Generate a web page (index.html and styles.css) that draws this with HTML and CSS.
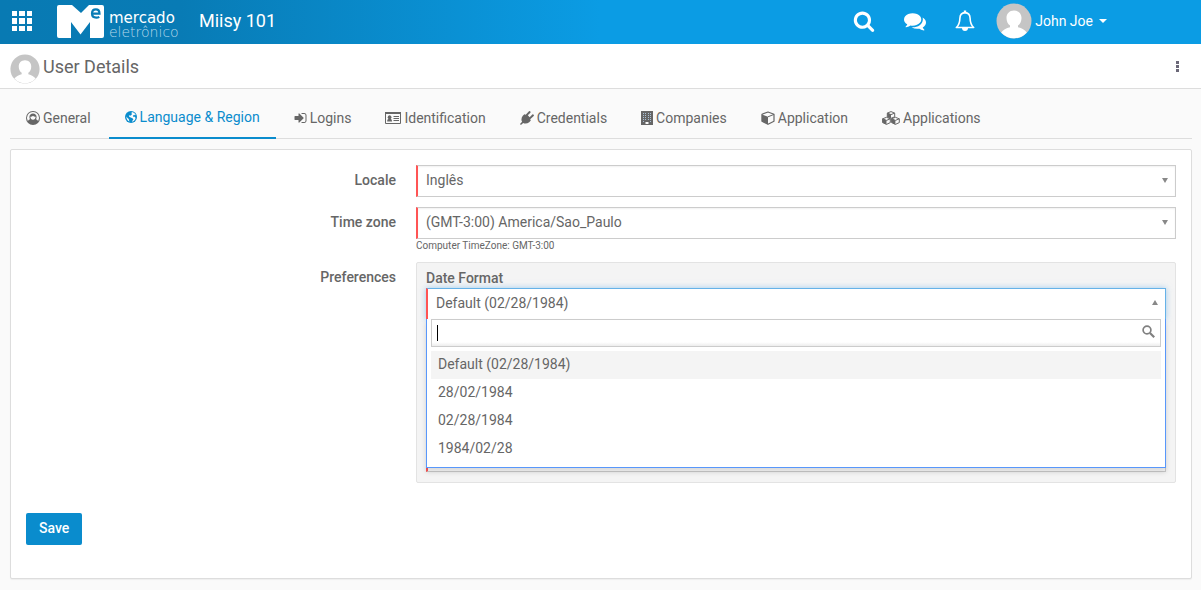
FILE: index.html
```html
<!DOCTYPE html>
<html lang="en">
<head>
<meta charset="utf-8">
<meta name="viewport" content="width=device-width, initial-scale=1">
<title>User Details</title>
<link rel="stylesheet" href="styles.css">
</head>
<body>
<svg class="defs" aria-hidden="true">
  <symbol id="avatar" viewBox="0 0 36 36">
    <circle cx="18" cy="18" r="17.5" fill="#c5c5c5"/>
    <path fill="#fff" d="M18 7.500c-4.600 0-7.500 3.300-7.500 7.500 0 3.300 1.300 6 3.500 7.600v1.600c-3.800.8-7 3-8.800 5.300A17.300 17.300 0 0 0 18 35.300 17.300 17.300 0 0 0 30.800 29.500c-1.800-2.300-5-4.500-8.800-5.300v-1.600c2.200-1.600 3.500-4.300 3.500-7.600 0-4.200-2.900-7.500-7.500-7.500z"/>
  </symbol>
</svg>
<header class="topbar">
  <button class="icon-button" type="button" aria-label="Apps">
    <svg width="20" height="20" viewBox="0 0 20 20" fill="#fff"><path d="M0 0h5v5H0zM7 0h6v5H7zM15 0h5v5h-5zM0 7h5v6H0zM7 7h6v6H7zM15 7h5v6h-5zM0 15h5v5H0zM7 15h6v5H7zM15 15h5v5h-5z"/></svg>
  </button>
  <a class="brand" href="#">
    <svg class="brand-mark" width="47" height="33" viewBox="0 0 47 33">
      <path fill="#fff" d="M2 0h13l9 8 8-8h13a2 2 0 0 1 2 2v29a2 2 0 0 1-2 2H33V17l-9.500 12.500L14 17v16H2a2 2 0 0 1-2-2V2a2 2 0 0 1 2-2z"/>
      <path fill="none" stroke="#087bb5" stroke-width="2.200" d="M35.200 8.700h7.300c0-3-1.300-4.300-3.600-4.300-2.400 0-3.900 1.600-3.900 4.100 0 2.700 1.500 4.100 4.200 4.100 1.100 0 2.200-.2 3.100-.7"/>
    </svg>
    <span class="brand-name"><span class="brand-top">mercado</span><span class="brand-bottom">eletrônico</span></span>
  </a>
  <span class="site">Miisy 101</span>
  <nav class="actions">
    <button class="icon-button" type="button" aria-label="Search"><svg width="22" height="22" viewBox="0 0 1792 1792" fill="#fff"><path d="M1216 832q0-185-131.500-316.500t-316.500-131.500-316.500 131.500-131.500 316.500 131.500 316.500 316.500 131.500 316.500-131.500 131.500-316.500zm512 832q0 52-38 90t-90 38q-54 0-90-38l-343-342q-179 124-399 124-143 0-273.500-55.500t-225-150-150-225-55.500-273.500 55.500-273.500 150-225 225-150 273.500-55.500 273.500 55.500 225 150 150 225 55.500 273.500q0 220-124 399l343 343q37 37 37 90z"/></svg></button>
    <button class="icon-button" type="button" aria-label="Messages"><svg width="22" height="22" viewBox="0 0 1792 1792" fill="#fff"><path d="M1408 768q0 139-94 257t-256.500 186.500-353.500 68.500q-86 0-176-16-124 88-278 128-36 9-86 16h-3q-11 0-20.500-8t-11.500-21q-1-3-1-6.500t.5-6.500 2-6l2.500-5 3.500-5.500 4-5 4.500-5 4-4.500q5-6 23-25t26-29.500 22.500-29 25-38.500 20.500-44q-124-72-195-177t-71-224q0-139 94-257t256.500-186.500 353.500-68.500 353.500 68.500 256.500 186.500 94 257zm384 256q0 120-71 224.500t-195 176.500q10 24 20.500 44t25 38.500 22.500 29 26 29.500 23 25q1 1 4 4.500t4.500 5 4 5 3.500 5.500l2.500 5 2 6 .5 6.500-1 6.500q-3 14-13 22t-22 7q-50-7-86-16-154-40-278-128-90 16-176 16-271 0-472-132 58 4 88 4 161 0 309-45t264-129q125-92 192-212t67-254q0-77-23-152 129 71 204 178t75 230z"/></svg></button>
    <button class="icon-button" type="button" aria-label="Notifications"><svg width="20" height="22" viewBox="0 0 20 22"><path fill="none" stroke="#fff" stroke-width="1.600" stroke-linejoin="round" d="M10 2.600c-3.500.2-5 2.800-5.100 5.600-.1 4.300-1 7.100-3.600 9.300h17.400c-2.600-2.200-3.500-5-3.600-9.300-.1-2.800-1.600-5.400-5.100-5.600z"/><path fill="#fff" d="M8.800.6h2.400v2.400H8.800zM7 18h6a3 3 0 0 1-6 0z"/></svg></button>
    <button class="user-menu" type="button"><svg width="36" height="36"><use href="#avatar"/></svg><span>John Joe</span><span class="caret-down"></span></button>
  </nav>
</header>
<div class="titlebar">
  <svg width="30" height="30"><use href="#avatar"/></svg>
  <h1 class="title">User Details</h1>
  <button class="more" type="button" aria-label="More"><svg width="3" height="11" viewBox="0 0 3 11" fill="#6b6878"><path d="M0 0h3v3H0zM0 4h3v3H0zM0 8h3v3H0z"/></svg></button>
</div>
<main class="page">
  <nav class="tabs">
    <a class="tab" href="#"><svg width="14" height="14" viewBox="0 0 14 14"><circle cx="7" cy="7" r="7" fill="currentColor"/><path fill="#fafafa" d="M7 1a6 6 0 0 1 5.100 9.200c-.4-1-1-1.700-2.200-1.900A3.700 3.700 0 0 0 10.600 6C10.600 3.800 9 2.600 7 2.600S3.400 3.800 3.400 6c0 .9.200 1.700.7 2.300-1.200.2-1.800.9-2.200 1.900A6 6 0 0 1 7 1z"/><path fill="#fafafa" d="M4.300 5.800C5.400 6 6.300 5.600 7 4.800c.7.800 1.600 1.200 2.700 1C9.500 7.700 8.500 8.800 7 8.800S4.500 7.700 4.300 5.800z"/></svg>General</a>
    <a class="tab tab-active" href="#" aria-current="page"><svg width="12" height="12" viewBox="0 0 12 12"><circle cx="6" cy="6" r="6" fill="currentColor"/><path fill="#fafafa" d="M7 1c1.700.4 3.100 1.500 3.700 3l-.9.300-.6-.6-1.300 1 .3 1 1.600.1.800 1.100-.5 1.500C9.400 9.600 8.400 10.400 7 10.800l.5-1.300.9-1.100-.9-1.200-1.700-.6L4.500 6l-.7-1.300 1.100-.4.900.4.600-1 .8-.8-.9-.6zM1.500 5.500l1 1.600 1.300.9.200 1.300.5 1.300A5 5 0 0 1 1.500 5.500z"/></svg>Language &amp; Region</a>
    <a class="tab" href="#"><svg width="13" height="14" viewBox="128 0 1536 1792" fill="currentColor"><path d="M1312 896q0 26-19 45l-544 544q-19 19-45 19t-45-19-19-45v-288h-448q-26 0-45-19t-19-45v-384q0-26 19-45t45-19h448v-288q0-26 19-45t45-19 45 19l544 544q19 19 19 45zm352-352v704q0 119-84.500 203.500t-203.500 84.500h-320q-13 0-22.500-9.500t-9.500-22.500q0-4-1-20t-.5-26.500 3-23.500 10-19.500 20.500-6.500h320q66 0 113-47t47-113v-704q0-66-47-113t-113-47h-312l-11.500-1-11.500-3-8-5.500-7-9-2-13.500q0-4-1-20t-.5-26.500 3-23.500 10-19.500 20.500-6.500h320q119 0 203.500 84.500t84.500 203.500z"/></svg>Logins</a>
    <a class="tab" href="#"><svg width="16" height="12" viewBox="0 0 16 12"><path fill="none" stroke="currentColor" d="M.5.5h15v11H.5z"/><path fill="currentColor" d="M0 0h16v2H0zM2.200 9.500c0-1.700.4-2.500 1.300-2.600a1.900 1.900 0 1 1 2.200 0c.9.100 1.300.9 1.300 2.600zM8.500 4H14v1H8.500zM8.500 6H14v1H8.500zM8.500 8H14v1H8.500z"/></svg>Identification</a>
    <a class="tab" href="#"><svg width="14" height="14" viewBox="0 0 14 14"><path fill="currentColor" d="M2.800 4.800 4.400 3.200l1.300.6L9 .3a1 1 0 0 1 1.400 1.400L7.800 4.300l1.900 1.900 2.600-2.600a1 1 0 0 1 1.400 1.400l-3.500 3.300.6 1.300-1.600 1.600c-1.900 1.500-4.200 1.800-6 .7L.9 14 0 13.100l2.100-2.300c-1.100-1.800-.8-4.100.7-6z"/></svg>Credentials</a>
    <a class="tab" href="#"><svg width="12" height="14" viewBox="0 0 12 14"><path fill="currentColor" d="M0 0h12v14H0z"/><path fill="#a9c0d4" d="M2 2h1v1H2zM4 2h1v1H4zM7 2h1v1H7zM9 2h1v1H9zM2 4h1v1H2zM4 4h1v1H4zM7 4h1v1H7zM9 4h1v1H9zM2 6h1v1H2zM4 6h1v1H4zM7 6h1v1H7zM9 6h1v1H9zM2 8h1v1H2zM4 8h1v1H4zM7 8h1v1H7zM9 8h1v1H9zM2 10h1v1H2zM9 10h1v1H9z"/><path fill="#fafafa" d="M4.500 11h3v2h-3z"/></svg>Companies</a>
    <a class="tab" href="#"><svg width="14" height="14" viewBox="0 0 14 14"><path fill="none" stroke="currentColor" stroke-width="1.200" stroke-linejoin="round" d="M7 1l6 2.200v7L7 13.300l-6-3.100v-7z"/><path fill="currentColor" d="M.8 3.300 7 5.800v7.500l-6.200-3.100z"/><path fill="none" stroke="currentColor" d="M7 5.800l6-2.400"/></svg>Application</a>
    <a class="tab" href="#"><svg width="18" height="14" viewBox="0 0 18 14"><g fill="none" stroke="currentColor" stroke-linejoin="round"><path d="M9 .6l3.700 1.500v3.700L9 7.300 5.300 5.800V2.100zM5.300 2.100 9 3.600l3.700-1.500M4.500 6.300l3.800 1.500v3.800l-3.800 1.800-3.900-1.800V7.800zM.6 7.800l3.900 1.600 3.800-1.600M13.400 6.300l3.900 1.500v3.800l-3.900 1.800-3.800-1.800V7.800zM9.600 7.800l3.800 1.600 3.900-1.600"/></g><path fill="currentColor" d="M5.300 2.100 9 3.600v3.700L5.300 5.800zM.6 7.800l3.900 1.600v4L.6 11.600zM9.600 7.800l3.800 1.600v4l-3.800-1.800z"/></svg>Applications</a>
  </nav>
  <form class="panel">
    <div class="fields">
      <label class="label" for="locale">Locale</label>
      <div class="select-box"><select class="select" id="locale"><option>Inglês</option></select></div>
      <label class="label" for="zone">Time zone</label>
      <div>
        <div class="select-box"><select class="select" id="zone"><option>(GMT-3:00) America/Sao_Paulo</option></select></div>
        <p class="hint">Computer TimeZone: GMT-3:00</p>
      </div>
      <span class="label">Preferences</span>
      <div class="preferences">
        <label class="sub-label" for="date-format">Date Format</label>
        <div class="select-box select-open">
          <select class="select" id="date-format"><option>Default (02/28/1984)</option></select>
          <div class="dropdown">
            <div class="search">
              <input class="search-input" type="text" aria-label="Date Format">
              <span class="text-caret"></span>
              <svg class="search-icon" width="13" height="13" viewBox="0 0 13 13" fill="none" stroke="#808080"><circle cx="5" cy="5" r="3.900" stroke-width="1.700"/><path stroke-width="2.200" d="M8 8l4.200 4.200"/></svg>
            </div>
            <ul class="options" role="listbox" aria-label="Date Format">
              <li class="option option-active" role="option" aria-selected="true">Default (02/28/1984)</li>
              <li class="option" role="option">28/02/1984</li>
              <li class="option" role="option">02/28/1984</li>
              <li class="option" role="option">1984/02/28</li>
            </ul>
          </div>
        </div>
        <div class="select-box select-last"><select class="select" aria-label="Preferences"></select></div>
      </div>
    </div>
    <button class="save" type="button">Save</button>
  </form>
</main>
</body>
</html>
```
FILE: styles.css
```css
* { box-sizing: border-box; }
body {
  margin: 0;
  background: #fafafa;
  color: #666;
  font: 14px/20px Roboto, sans-serif;
}
button { border: 0; padding: 0; background: none; color: inherit; font: inherit; cursor: pointer; }
a { color: inherit; text-decoration: none; }
svg { display: block; flex: none; }
.defs { position: absolute; width: 0; height: 0; }

.topbar {
  display: flex;
  align-items: center;
  height: 44px;
  padding: 0 94px 2px 12px;
  background: linear-gradient(90deg, #087ab3 0, #087bb5 15%, #0b9ce4 50%);
  color: #fff;
}
.brand { display: flex; margin-left: 25px; gap: 5px; align-items: center; }
.brand-name {
  display: flex;
  flex-direction: column;
  width: 69px;
  padding-top: 8px;
  font-family: "DejaVu Sans", sans-serif;
  line-height: 14px;
}
.brand-top { font-size: 15px; }
.brand-bottom { font-size: 14px; font-weight: 200; color: #b5d8ea; }
.site { margin-left: 21px; font-size: 18px; }
.actions { display: flex; align-items: center; margin-left: auto; gap: 29px; }
.user-menu { display: flex; align-items: center; gap: 3px; margin-left: -8px; }
.caret-down { margin-left: 3px; border: 4px solid transparent; border-top-color: #fff; border-bottom: 0; }

.titlebar {
  display: flex;
  align-items: center;
  gap: 3px;
  height: 45px;
  padding: 5px 22px 0 10px;
  background: #fff;
  border-bottom: 1px solid #ddd;
}
.title { margin: 0 0 3px; font-size: 18px; font-weight: 400; }
.more { margin: 0 0 5px auto; }

.page { padding: 0 9px 10px 10px; }
.tabs { display: flex; gap: 2px; height: 50px; border-bottom: 1px solid #ddd; }
.tab { display: flex; align-items: center; gap: 3px; padding: 8px 16px 0; margin-bottom: -1px; white-space: nowrap; }
.tab-active { color: #0a8ccd; border-bottom: 2px solid #0a8ccd; }

.panel {
  margin-top: 10px;
  padding: 15px 15px 33px;
  background: #fff;
  border: 1px solid #ddd;
  border-radius: 2px;
  box-shadow: 0 1px 1px rgba(0, 0, 0, .05);
}
.fields { display: grid; grid-template-columns: 37fr 76fr; gap: 10px 20px; }
.label { padding-top: 5px; text-align: right; font-weight: 500; }
.select-box { position: relative; }
.select-box::after {
  content: "";
  position: absolute;
  top: 13px;
  right: 8px;
  border: 3px solid transparent;
  border-top: 5px solid #888;
  border-bottom: 0;
}
.select {
  display: block;
  appearance: none;
  width: 100%;
  height: 32px;
  padding: 0 20px 2px 8px;
  border: 1px solid #ccc;
  border-left: 2px solid #ff5454;
  border-radius: 0;
  outline: 0;
  background: #fff;
  box-shadow: inset 0 1px 2px rgba(0, 0, 0, .06);
  color: inherit;
  font: inherit;
}
.hint { margin: 0; font-size: 10px; line-height: 13px; }
.preferences {
  padding: 5px 9px 10px;
  background: #f4f4f4;
  border: 1px solid #e3e3e3;
  border-radius: 2px;
}
.sub-label { display: block; font-weight: 500; }
.select-open .select {
  border-color: #66b2e8 #66b2e8 #fff #ff5454;
  box-shadow: 0 0 6px rgba(102, 175, 233, .6);
}
.select-open::after { border-top: 0; border-bottom: 5px solid #888; top: 12px; }
.select-last { margin-top: 120px; }
.dropdown {
  position: absolute;
  z-index: 2;
  top: 31px;
  left: 0;
  right: 0;
  padding: 0 4px 4px;
  background: #fff;
  border: 1px solid #5897fb;
  border-top: 0;
  box-shadow: 0 4px 5px rgba(0, 0, 0, .15);
}
.search { position: relative; }
.search-input {
  display: block;
  width: 100%;
  height: 28px;
  padding: 4px 20px 4px 5px;
  border: 1px solid #ccc;
  outline: 0;
  background: linear-gradient(#fff 85%, #eee 99%);
  font: inherit;
}
.text-caret { position: absolute; top: 6px; left: 6px; width: 1px; height: 16px; background: #000; }
.search-icon { position: absolute; top: 6px; right: 6px; }
.options { margin: 4px 0 0; padding: 0; list-style: none; }
.option { padding: 3px 7px 5px; }
.option-active { background: #f4f4f4; }
.save {
  display: block;
  height: 32px;
  margin-top: 30px;
  padding: 0 13px 2px;
  border-radius: 2px;
  background: #0a8ccd;
  color: #fff;
  font-weight: 500;
}
```
